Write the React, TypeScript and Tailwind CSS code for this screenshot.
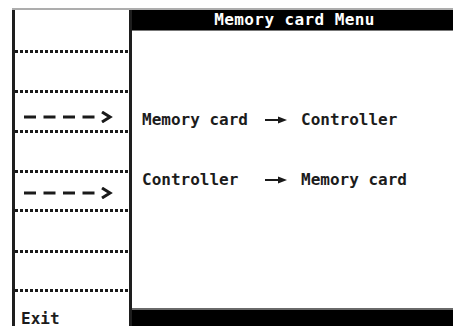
import React from "react";

function Dotted() {
  return (
    <div className="h-[3px] w-full shrink-0 bg-[linear-gradient(90deg,#1a1a1a_3px,transparent_3px)] bg-[length:5px_3px] bg-repeat-x" />
  );
}

function DashArrow() {
  return (
    <svg width="92" height="12" viewBox="0 0 92 12" className="block">
      <rect x="0" y="4.5" width="12" height="3" fill="#1a1a1a" />
      <rect x="19.5" y="4.5" width="12" height="3" fill="#1a1a1a" />
      <rect x="39" y="4.5" width="12" height="3" fill="#1a1a1a" />
      <rect x="58.5" y="4.5" width="12" height="3" fill="#1a1a1a" />
      <polyline
        points="78,1 86,6 78,11"
        fill="none"
        stroke="#1a1a1a"
        strokeWidth="3"
        strokeLinejoin="miter"
      />
    </svg>
  );
}

function Arrow() {
  return (
    <svg width="22" height="10" viewBox="0 0 22 10" className="block">
      <rect x="0" y="4" width="14" height="2" fill="#1a1a1a" />
      <polygon points="13,1.5 22,5 13,8.5" fill="#1a1a1a" />
    </svg>
  );
}

export default function App() {
  return (
    <div className="w-[453px] h-[326px] bg-white overflow-hidden pt-[8px] pl-[12px] font-['DejaVu_Sans_Mono','Liberation_Mono',monospace] font-bold text-[16px] leading-[20px] text-[#1c1c1c]">
      <div className="flex h-full border-t-2 border-[#adadad]">
        <div className="w-[120px] shrink-0 border-l-[3px] border-r-[3px] border-[#1e1e1e] flex flex-col">
          <div className="h-[40px] shrink-0" />
          <Dotted />
          <div className="h-[37px] shrink-0" />
          <Dotted />
          <div className="h-[37px] shrink-0 pt-[18px] pl-[9px]">
            <DashArrow />
          </div>
          <Dotted />
          <div className="h-[37px] shrink-0" />
          <Dotted />
          <div className="h-[36px] shrink-0 pt-[14px] pl-[9px]">
            <DashArrow />
          </div>
          <Dotted />
          <div className="h-[38px] shrink-0" />
          <Dotted />
          <div className="h-[36px] shrink-0" />
          <Dotted />
          <div className="flex-1 pt-[20px] pl-[6px] leading-[14px]">Exit</div>
        </div>
        <div className="flex-1 flex flex-col min-w-0">
          <div className="h-[21px] shrink-0 bg-black border-b border-[#777777] text-white text-center leading-[20px] tracking-[0.4px] pl-[4px]">
            Memory card Menu
          </div>
          <div className="flex-1 pt-[79px] pl-[10px] flex flex-col gap-[40px]">
            <div className="flex items-center h-[20px]">
              <span className="w-[123px] shrink-0">Memory card</span>
              <span className="w-[36px] shrink-0">
                <Arrow />
              </span>
              <span>Controller</span>
            </div>
            <div className="flex items-center h-[20px]">
              <span className="w-[123px] shrink-0">Controller</span>
              <span className="w-[36px] shrink-0">
                <Arrow />
              </span>
              <span>Memory card</span>
            </div>
          </div>
          <div className="h-[18px] shrink-0 bg-black border-t-2 border-[#6a6a6a]" />
        </div>
      </div>
    </div>
  );
}
